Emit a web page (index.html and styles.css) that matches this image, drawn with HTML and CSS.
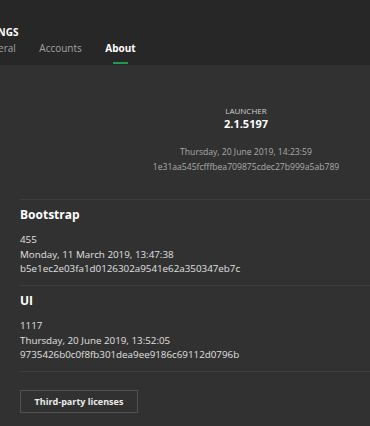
FILE: index.html
```html
<!DOCTYPE html>
<html>
<head>
<meta charset="utf-8">
<link rel="stylesheet" href="styles.css">
</head>
<body>
<div class="app">
  <header class="header">
    <div class="header-inner">
      <div class="title">SETTINGS</div>
      <nav class="tabs">
        <div class="tab"><span class="tab-label">General</span><span class="tab-bar"></span></div>
        <div class="tab"><span class="tab-label">Accounts</span><span class="tab-bar"></span></div>
        <div class="tab active"><span class="tab-label">About</span><span class="tab-bar"></span></div>
      </nav>
    </div>
  </header>
  <main class="content">
    <section class="launcher">
      <div class="launcher-label">LAUNCHER</div>
      <div class="launcher-version">2.1.5197</div>
      <div class="launcher-meta">Thursday, 20 June 2019, 14:23:59</div>
      <div class="launcher-meta">1e31aa545fcfffbea709875cdec27b999a5ab789</div>
    </section>
    <section class="component">
      <h2 class="component-title">Bootstrap</h2>
      <div class="component-line">455</div>
      <div class="component-line">Monday, 11 March 2019, 13:47:38</div>
      <div class="component-line">b5e1ec2e03fa1d0126302a9541e62a350347eb7c</div>
    </section>
    <section class="component">
      <h2 class="component-title">UI</h2>
      <div class="component-line">1117</div>
      <div class="component-line">Thursday, 20 June 2019, 13:52:05</div>
      <div class="component-line">9735426b0c0f8fb301dea9ee9186c69112d0796b</div>
    </section>
    <div class="actions">
      <button class="btn">Third-party licenses</button>
    </div>
  </main>
</div>
</body>
</html>
```
FILE: styles.css
```css
html, body {
  margin: 0;
  padding: 0;
  background: #313131;
  overflow: hidden;
  height: 426px;
}
.app {
  width: 492px;
  font-family: "Open Sans", "Noto Sans", sans-serif;
  color: #dcdcdc;
}
.header {
  background: #272727;
  height: 65px;
  box-sizing: border-box;
  padding-top: 26px;
}
.header-inner {
  margin-left: -21px;
}
.title {
  margin-left: -8px;
  font-size: 10px;
  font-weight: 700;
  line-height: 12px;
  color: #ffffff;
  letter-spacing: 0.1px;
}
.tabs {
  display: flex;
  gap: 23.5px;
  margin-top: 3px;
}
.tab {
  display: flex;
  flex-direction: column;
  align-items: center;
}
.tab-label {
  font-size: 10px;
  line-height: 14px;
  color: #a3a3a3;
}
.tab-bar {
  width: 15px;
  height: 2px;
  margin-top: 7px;
  background: transparent;
}
.tab.active .tab-label {
  color: #ffffff;
  font-weight: 700;
}
.tab.active .tab-bar {
  background: #1e9a4a;
}
.content {
  padding: 0 20px;
}
.launcher {
  padding-top: 41px;
  padding-bottom: 25px;
  text-align: center;
  border-bottom: 1px solid #3d3d3d;
}
.launcher-label {
  font-size: 8px;
  line-height: 10px;
  color: #d0d0d0;
}
.launcher-version {
  font-size: 11px;
  font-weight: 700;
  line-height: 14px;
  color: #ffffff;
  margin-top: 1px;
  margin-bottom: 14px;
}
.launcher-meta {
  font-size: 8.6px;
  line-height: 14.5px;
  color: #ababab;
}
.component {
  padding-top: 7px;
  padding-bottom: 8.5px;
  border-bottom: 1px solid #3d3d3d;
}
.component-title {
  margin: 0 0 10px 0;
  font-size: 12px;
  font-weight: 700;
  line-height: 16px;
  color: #ffffff;
}
.component-line {
  font-size: 9.8px;
  line-height: 14.5px;
  color: #e0e0e0;
}
.actions {
  padding-top: 16px;
}
.btn {
  width: 118px;
  height: 23px;
  box-sizing: border-box;
  background: #313131;
  border: 1px solid #525252;
  color: #ececec;
  font-family: "Open Sans", "Noto Sans", sans-serif;
  font-size: 9px;
  font-weight: 700;
  padding: 0;
  margin: 0;
}
```
